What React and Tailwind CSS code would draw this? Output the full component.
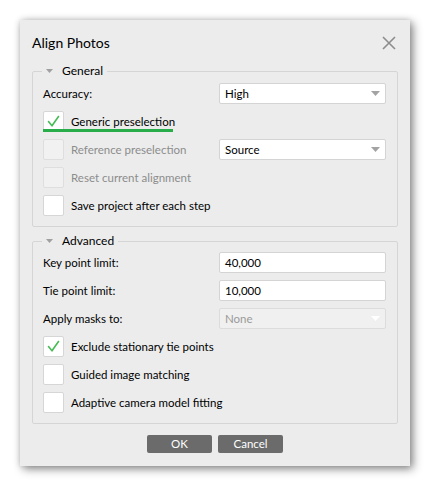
import React from 'react';

const font = { fontFamily: 'Lato, "Noto Sans", sans-serif' };

function Check() {
  return (
    <svg width="19" height="19" viewBox="0 0 19 19" className="absolute left-0 top-0">
      <path d="M4.5 9.5 L8 13.8 L14.5 4.5" fill="none" stroke="#45bb55" strokeWidth="1.6" strokeLinecap="round" strokeLinejoin="round" />
    </svg>
  );
}

function Checkbox({ checked, disabled, label, focus }) {
  return (
    <div className="relative flex h-[21px] items-center gap-[7px]">
      <div
        className={
          'relative h-[21px] w-[21px] shrink-0 rounded-[2px] border ' +
          (disabled ? 'border-[#dedede] bg-[#f1f1f1]' : 'border-[#d6d6d6] bg-white')
        }
      >
        {checked && <Check />}
      </div>
      <span className={disabled ? 'text-[#8d8d8d]' : 'text-black'}>{label}</span>
      {focus && <span className="absolute bottom-0 left-0 h-[3px] w-[130px] bg-[#28ad4a]" />}
    </div>
  );
}

function Combo({ value, disabled }) {
  return (
    <div
      className={
        'flex h-[21px] w-[167px] items-center justify-between rounded-[2px] border pl-[5px] pr-[5px] ' +
        (disabled ? 'border-[#dcdcdc] bg-[#f0f0f0] text-[#9a9a9a]' : 'border-[#d4d4d4] bg-white text-black')
      }
    >
      <span>{value}</span>
      <svg width="9" height="5" viewBox="0 0 9 5">
        <path d="M0 0 H9 L4.5 5 Z" fill={disabled ? '#ffffff' : '#a3a3a3'} />
      </svg>
    </div>
  );
}

function Field({ value }) {
  return (
    <div className="flex h-[21px] w-[167px] items-center rounded-[2px] border border-[#d4d4d4] bg-white pl-[5px] text-black">
      {value}
    </div>
  );
}

function Row({ label, children }) {
  return (
    <div className="flex h-[21px] items-center">
      <span className="w-[176px] text-black">{label}</span>
      {children}
    </div>
  );
}

function Group({ title, children, className }) {
  return (
    <fieldset className={'rounded-[2px] border border-[#d5d5d5] px-[10px] ' + className}>
      <legend className="ml-[-1px] flex items-center gap-[9px] px-[4px] leading-[14px]">
        <svg width="7" height="4" viewBox="0 0 7 4">
          <path d="M0 0 H7 L3.5 4 Z" fill="#a0a0a0" />
        </svg>
        <span className="text-[12px] text-black">{title}</span>
      </legend>
      <div className="flex flex-col gap-[7px]">{children}</div>
    </fieldset>
  );
}

export default function App() {
  return (
    <div className="h-[486px] w-[430px] bg-white p-[20px] text-[11.5px]" style={font}>
      <div className="flex h-[446px] w-[390px] flex-col bg-[#ececec] px-[12px] shadow-[3px_3px_9px_rgba(0,0,0,0.45),0_0_6px_rgba(0,0,0,0.15)]">
        {/* Title bar */}
        <div className="flex h-[44px] items-center justify-between pt-[1px]">
          <span className="text-[14px] text-black">Align Photos</span>
          <svg width="14" height="14" viewBox="0 0 14 14" className="mr-[2px]">
            <path d="M1 1 L13 13 M13 1 L1 13" stroke="#8c8c8c" strokeWidth="1.6" />
          </svg>
        </div>

        <Group title="General" className="pt-[5px] pb-[10px]">
          <Row label="Accuracy:">
            <Combo value="High" />
          </Row>
          <Checkbox checked focus label="Generic preselection" />
          <div className="flex h-[21px] items-center">
            <div className="w-[176px]">
              <Checkbox disabled label="Reference preselection" />
            </div>
            <Combo value="Source" />
          </div>
          <Checkbox disabled label="Reset current alignment" />
          <Checkbox label="Save project after each step" />
        </Group>

        <Group title="Advanced" className="mt-[7px] pt-[4px] pb-[10px]">
          <Row label="Key point limit:">
            <Field value="40,000" />
          </Row>
          <Row label="Tie point limit:">
            <Field value="10,000" />
          </Row>
          <Row label="Apply masks to:">
            <Combo value="None" disabled />
          </Row>
          <Checkbox checked label="Exclude stationary tie points" />
          <Checkbox label="Guided image matching" />
          <Checkbox label="Adaptive camera model fitting" />
        </Group>

        <div className="mt-[11px] flex justify-center gap-[6px]">
          <button className="h-[18px] w-[65px] rounded-[2px] bg-[#6b6b6b] text-white">OK</button>
          <button className="h-[18px] w-[65px] rounded-[2px] bg-[#6b6b6b] text-white">Cancel</button>
        </div>
      </div>
    </div>
  );
}
